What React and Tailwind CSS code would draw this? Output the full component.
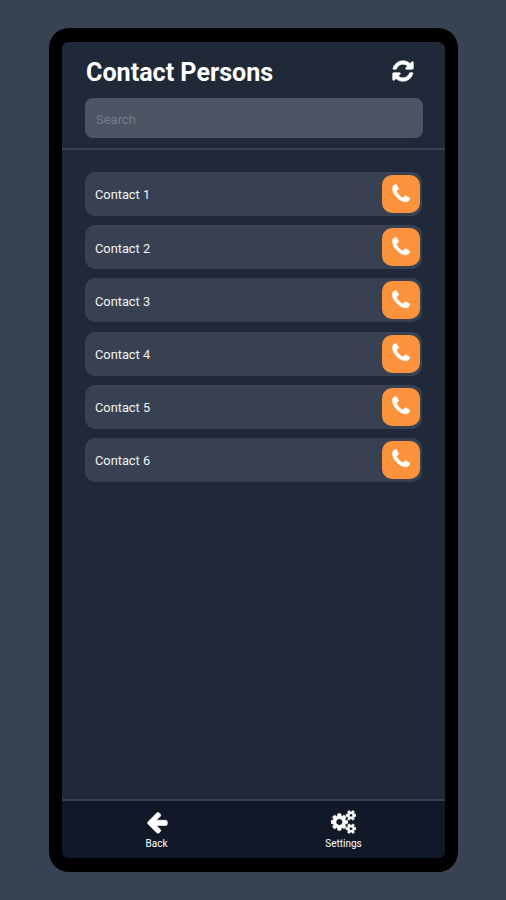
import React, { useState } from 'react';

const ICONS = {
  refresh:
    'M1639 1056q0 5-1 7-64 268-268 434.5t-478 166.5q-146 0-282.5-55t-243.5-157l-129 129q-19 19-45 19t-45-19-19-45v-448q0-26 19-45t45-19h448q26 0 45 19t19 45-19 45l-137 137q71 66 161 102t187 36q134 0 250-65t186-179q11-17 53-117 8-23 30-23h192q13 0 22.5 9.5t9.5 22.5zm25-800v448q0 26-19 45t-45 19h-448q-26 0-45-19t-19-45 19-45l138-138q-148-137-349-137-134 0-250 65t-186 179q-11 17-53 117-8 23-30 23h-199q-13 0-22.5-9.5t-9.5-22.5v-7q65-268 270-434.5t480-166.5q146 0 284 55.5t245 156.5l130-129q19-19 45-19t45 19 19 45z',
  phone:
    'M1600 1240q0 27-10 70.5t-21 68.5q-21 50-122 106-94 51-186 51-27 0-53-3.5t-57.5-12.5-47-14.5-55.5-20.5-49-18q-98-35-175-83-127-79-264-216t-216-264q-48-77-83-175-3-9-18-49t-20.5-55.5-14.5-47-12.5-57.5-3.5-53q0-92 51-186 56-101 106-122 25-11 68.5-21t70.5-10q14 0 21 3 18 6 53 76 11 19 30 54t35 63.5 31 53.5q3 4 17.5 25t21.5 35.5 7 28.5q0 20-28.5 50t-62 55-62 53-28.5 46q0 9 5 22.5t8.5 20.5 14 24 11.5 19q76 137 174 235t235 174q2 1 19 11.5t24 14 20.5 8.5 22.5 5q18 0 46-28.5t53-62 55-62 50-28.5q14 0 28.5 7t35.5 21.5 25 17.5q25 15 53.5 31t63.5 35 54 30q70 35 76 53 3 7 3 21z',
  back:
    'M1664 896v128q0 53-32.5 90.5t-84.5 37.5h-704l293 294q38 36 38 90t-38 90l-75 76q-37 37-90 37-52 0-91-37l-651-652q-37-37-37-90 0-52 37-91l651-650q38-38 91-38 52 0 90 38l75 74q38 38 38 91t-38 91l-293 293h704q52 0 84.5 37.5t32.5 90.5z',
  cogs:
    'M896 896q0-106-75-181t-181-75-181 75-75 181 75 181 181 75 181-75 75-181zm768 512q0-52-38-90t-90-38-90 38-38 90q0 53 37.5 90.5t90.5 37.5 90.5-37.5 37.5-90.5zm0-1024q0-52-38-90t-90-38-90 38-38 90q0 53 37.5 90.5t90.5 37.5 90.5-37.5 37.5-90.5zm-384 421v185q0 10-7 19.5t-16 10.5l-155 24q-11 35-32 76 34 48 90 115 7 11 7 20 0 12-7 19-23 30-82.5 89.5t-78.5 59.5q-11 0-21-7l-115-90q-37 19-77 31-11 108-23 155-7 24-30 24h-186q-11 0-20-7.5t-10-17.5l-23-153q-34-10-75-31l-118 89q-7 7-20 7-11 0-21-8-144-133-144-160 0-9 7-19 10-14 41-53t47-61q-23-44-35-82l-152-24q-10-1-17-9.5t-7-19.5v-185q0-10 7-19.5t16-10.5l155-24q11-35 32-76-34-48-90-115-7-11-7-20 0-12 7-20 22-30 82-89t79-59q11 0 21 7l115 90q34-18 77-32 11-108 23-154 7-24 30-24h186q11 0 20 7.5t10 17.5l23 153q34 10 75 31l118-89q8-7 20-7 11 0 21 8 144 133 144 160 0 8-7 19-12 16-42 54t-45 60q23 48 34 82l152 23q10 2 17 10.5t7 19.5zm640 533v140q0 16-149 31-12 27-30 52 51 113 51 138 0 4-4 7-122 71-124 71-8 0-46-47t-52-68q-20 2-30 2t-30-2q-14 21-52 68t-46 47q-2 0-124-71-4-3-4-7 0-25 51-138-18-25-30-52-149-15-149-31v-140q0-16 149-31 13-29 30-52-51-113-51-138 0-4 4-7 4-2 35-20t59-34 30-16q8 0 46 46.5t52 67.5q20-2 30-2t30 2q51-71 92-112l6-2q4 0 124 70 4 3 4 7 0 25-51 138 17 23 30 52 149 15 149 31zm0-1024v140q0 16-149 31-12 27-30 52 51 113 51 138 0 4-4 7-122 71-124 71-8 0-46-47t-52-68q-20 2-30 2t-30-2q-14 21-52 68t-46 47q-2 0-124-71-4-3-4-7 0-25 51-138-18-25-30-52-149-15-149-31v-140q0-16 149-31 13-29 30-52-51-113-51-138 0-4 4-7 4-2 35-20t59-34 30-16q8 0 46 46.5t52 67.5q20-2 30-2t30 2q51-71 92-112l6-2q4 0 124 70 4 3 4 7 0 25-51 138 17 23 30 52 149 15 149 31z',
};

const Icon = ({ name, viewBox = '0 0 1792 1792', className }) => (
  <svg viewBox={viewBox} fill="currentColor" stroke="currentColor" strokeWidth="50" className={className} aria-hidden="true">
    <path d={ICONS[name]} />
  </svg>
);

const contacts = [1, 2, 3, 4, 5, 6].map((id) => ({ id, name: `Contact ${id}` }));

const ContactRow = ({ contact }) => (
  <li className="flex h-11 items-center justify-between rounded-[10px] bg-[#374151] pr-[2.5px] pl-2.5">
    <span className="pt-0.5 text-[12.8px] text-gray-100">{contact.name}</span>
    <button className="flex size-[38px] items-center justify-center rounded-[10px] bg-[#fb923c] pb-px text-white" aria-label="Call">
      <Icon name="phone" className="size-[22px]" />
    </button>
  </li>
);

const NavButton = ({ label, children }) => (
  <button className="flex flex-1 flex-col items-center pt-[9px] text-white">
    {children}
    <span className="mt-[3px] text-[10px] leading-[14px]">{label}</span>
  </button>
);

export default function App() {
  const [search, setSearch] = useState('');
  const visible = contacts.filter((c) => c.name.toLowerCase().includes(search.toLowerCase()));

  return (
    <div className="h-[900px] w-full bg-[#374252] pt-7 pl-[49px] font-['Roboto',sans-serif]">
      <div className="flex h-[844px] w-[409px] flex-col overflow-hidden rounded-[20px] border-[13px] border-t-[14px] border-b-[14px] border-black bg-[#1f2937]">
        {/* Header */}
        <header className="h-[108px] border-b-2 border-[#374151] pr-[22.5px] pl-[23px]">
          <div className="flex h-14 items-center justify-between pt-[5px] pr-[8px] pl-px">
            <h1 className="text-[25.1px] font-bold text-white">Contact Persons</h1>
            <button className="pb-[4px] text-white" aria-label="Refresh">
              <Icon name="refresh" className="size-6" />
            </button>
          </div>
          <input
            type="text"
            value={search}
            onChange={(e) => setSearch(e.target.value)}
            placeholder="Search"
            className="block h-10 w-full rounded-lg bg-[#4b5563] px-[11px] pt-0.5 text-[13px] text-white outline-none placeholder:text-[#747d89]"
          />
        </header>

        {/* Contacts */}
        <ul className="flex flex-1 flex-col gap-[9.2px] pt-[22px] pr-[23px] pl-[23px]">
          {visible.map((contact) => (
            <ContactRow key={contact.id} contact={contact} />
          ))}
        </ul>

        {/* Bottom navigation */}
        <nav className="flex h-[59px] border-t-2 border-[#374151] bg-[#111827] pr-[8px] pl-px">
          <NavButton label="Back">
            <Icon name="back" className="size-6" />
          </NavButton>
          <NavButton label="Settings">
            <Icon name="cogs" viewBox="0 0 1920 1792" className="h-6 w-[25px]" />
          </NavButton>
        </nav>
      </div>
    </div>
  );
}
